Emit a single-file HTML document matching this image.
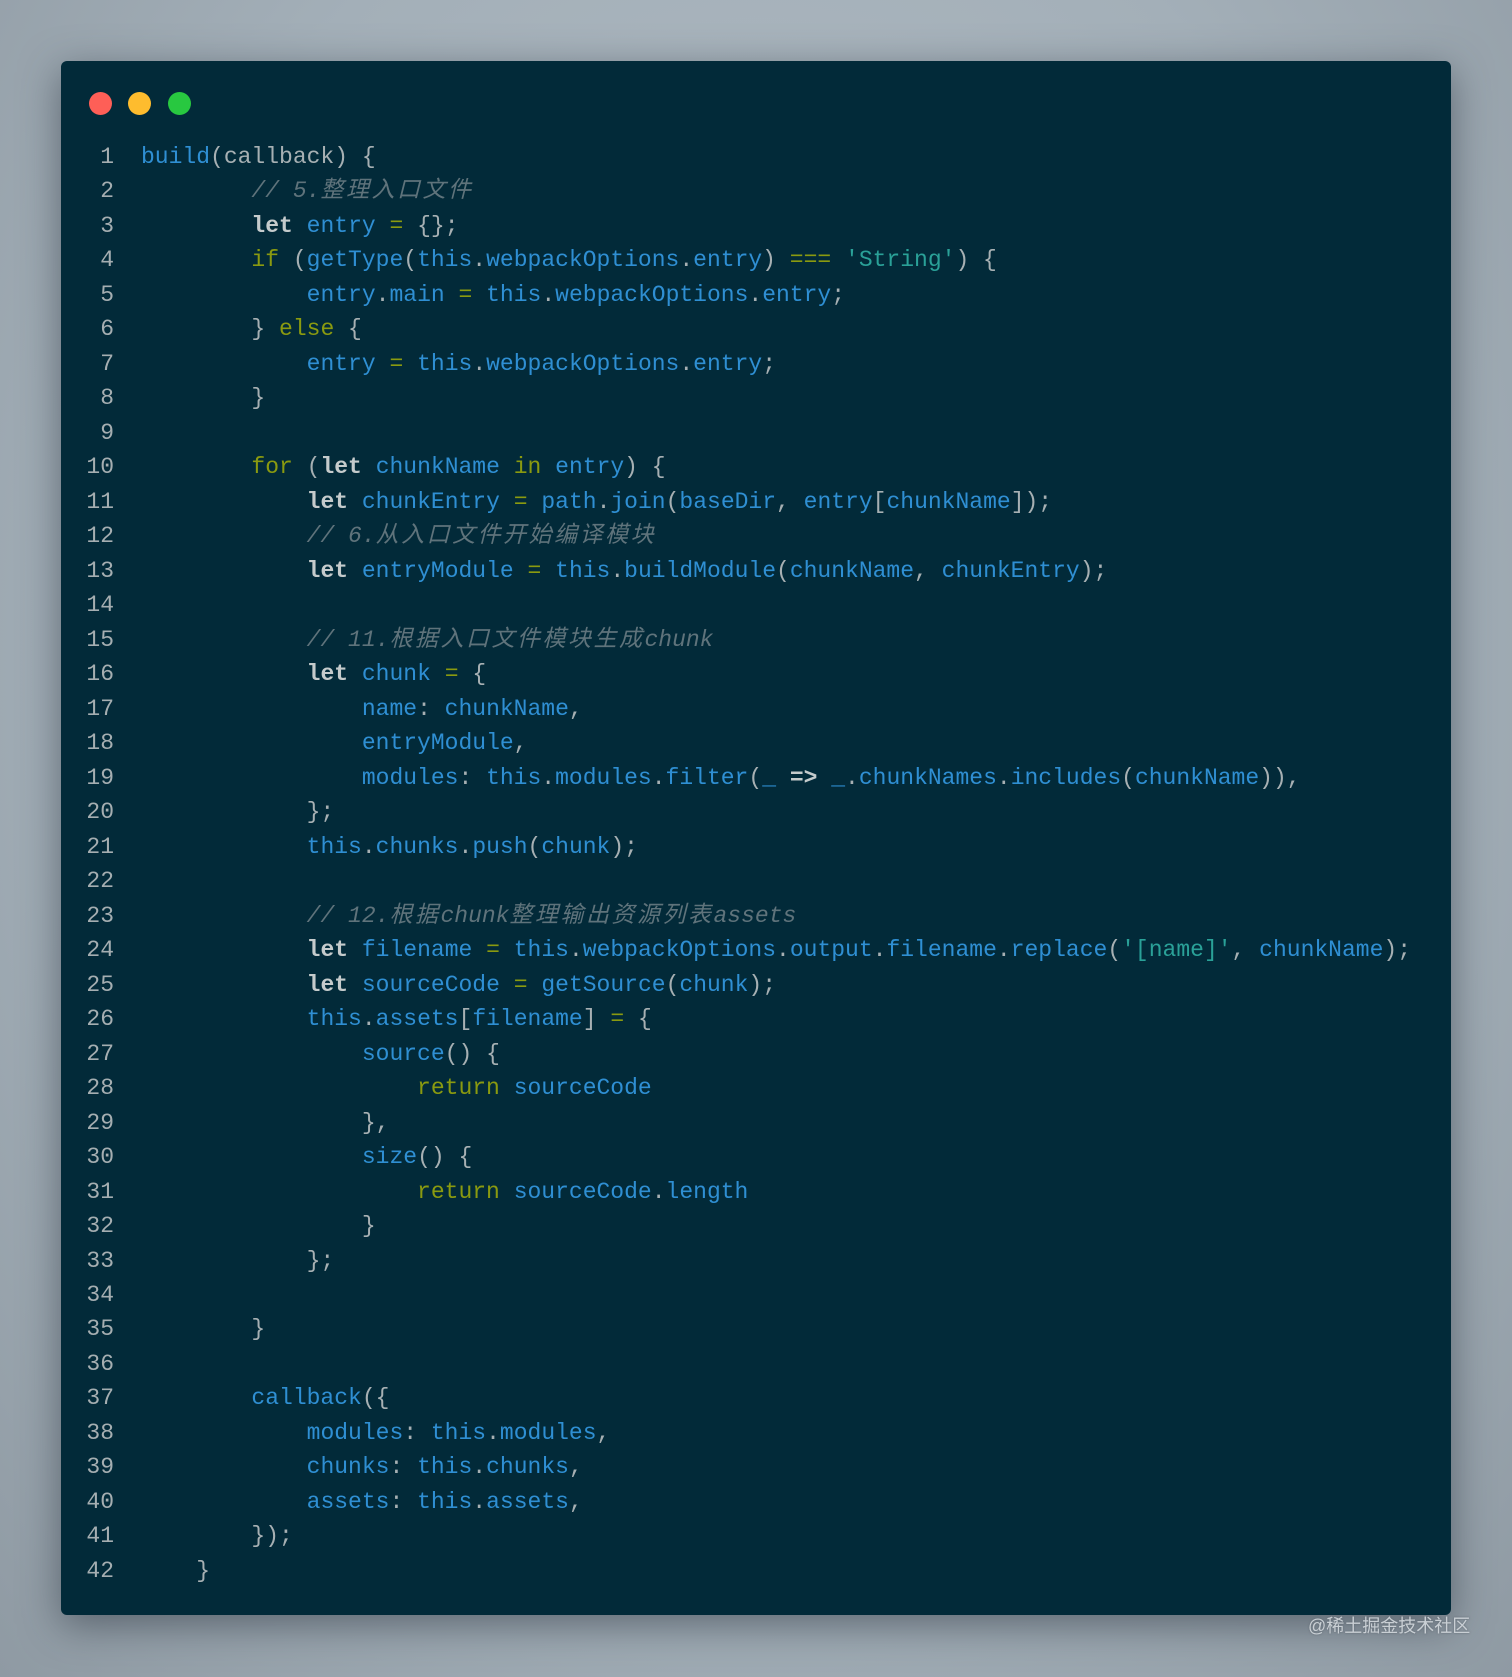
<!DOCTYPE html>
<html><head><meta charset="utf-8"><style>
html,body{margin:0;padding:0}
body{width:1512px;height:1677px;background:radial-gradient(ellipse at 50% 40%,#b4bec6 0%,#a3afb8 60%,#8f9aa3 100%);position:relative;overflow:hidden;font-family:"Liberation Mono","Noto Sans CJK SC",monospace}
.card{position:absolute;left:61px;top:61px;width:1390px;height:1554px;background:#022a39;border-radius:6px;box-shadow:0 10px 40px rgba(40,50,60,.55)}
.dot{position:absolute;top:92px;width:23px;height:23px;border-radius:50%}
.code{position:absolute;left:0;top:140px;font-size:23px;line-height:34.48px;white-space:pre;color:#a7b0b3}
.ln{position:absolute;left:78px;width:36px;text-align:right;color:#a5aeb1}
.tx{position:absolute;left:141px}
.b{color:#2f8fd3}.k{color:#8a9a10}.l{color:#c5cbcc;font-weight:bold}.s{color:#2aa198}.c{color:#5f737b;font-style:italic}
.z{letter-spacing:2.5px}
.wm{position:absolute;left:1308px;top:1612px;font-family:"Liberation Sans","Noto Sans CJK SC",sans-serif;font-size:18px;color:#c9cfd4;text-shadow:0 0 2px #5c6670}
</style></head><body>
<div class="card"></div>
<div class="dot" style="left:89px;background:#fe5f57"></div>
<div class="dot" style="left:128px;background:#febc2e"></div>
<div class="dot" style="left:168px;background:#28c840"></div>
<div class="code"><div class="ln">1
2
3
4
5
6
7
8
9
10
11
12
13
14
15
16
17
18
19
20
21
22
23
24
25
26
27
28
29
30
31
32
33
34
35
36
37
38
39
40
41
42</div><div class="tx"><span class="b">build</span>(callback) {
        <span class="c">// 5.<span class="z">整理入口文件</span></span>
        <span class="l">let</span> <span class="b">entry</span> <span class="k">=</span> {};
        <span class="k">if</span> (<span class="b">getType</span>(<span class="b">this</span>.<span class="b">webpackOptions</span>.<span class="b">entry</span>) <span class="k">===</span> <span class="s">'String'</span>) {
            <span class="b">entry</span>.<span class="b">main</span> <span class="k">=</span> <span class="b">this</span>.<span class="b">webpackOptions</span>.<span class="b">entry</span>;
        } <span class="k">else</span> {
            <span class="b">entry</span> <span class="k">=</span> <span class="b">this</span>.<span class="b">webpackOptions</span>.<span class="b">entry</span>;
        }

        <span class="k">for</span> (<span class="l">let</span> <span class="b">chunkName</span> <span class="k">in</span> <span class="b">entry</span>) {
            <span class="l">let</span> <span class="b">chunkEntry</span> <span class="k">=</span> <span class="b">path</span>.<span class="b">join</span>(<span class="b">baseDir</span>, <span class="b">entry</span>[<span class="b">chunkName</span>]);
            <span class="c">// 6.<span class="z">从入口文件开始编译模块</span></span>
            <span class="l">let</span> <span class="b">entryModule</span> <span class="k">=</span> <span class="b">this</span>.<span class="b">buildModule</span>(<span class="b">chunkName</span>, <span class="b">chunkEntry</span>);

            <span class="c">// 11.<span class="z">根据入口文件模块生成</span>chunk</span>
            <span class="l">let</span> <span class="b">chunk</span> <span class="k">=</span> {
                <span class="b">name</span>: <span class="b">chunkName</span>,
                <span class="b">entryModule</span>,
                <span class="b">modules</span>: <span class="b">this</span>.<span class="b">modules</span>.<span class="b">filter</span>(<span class="b">_</span> <span class="l">=&gt;</span> <span class="b">_</span>.<span class="b">chunkNames</span>.<span class="b">includes</span>(<span class="b">chunkName</span>)),
            };
            <span class="b">this</span>.<span class="b">chunks</span>.<span class="b">push</span>(<span class="b">chunk</span>);

            <span class="c">// 12.<span class="z">根据</span>chunk<span class="z">整理输出资源列表</span>assets</span>
            <span class="l">let</span> <span class="b">filename</span> <span class="k">=</span> <span class="b">this</span>.<span class="b">webpackOptions</span>.<span class="b">output</span>.<span class="b">filename</span>.<span class="b">replace</span>(<span class="s">'[name]'</span>, <span class="b">chunkName</span>);
            <span class="l">let</span> <span class="b">sourceCode</span> <span class="k">=</span> <span class="b">getSource</span>(<span class="b">chunk</span>);
            <span class="b">this</span>.<span class="b">assets</span>[<span class="b">filename</span>] <span class="k">=</span> {
                <span class="b">source</span>() {
                    <span class="k">return</span> <span class="b">sourceCode</span>
                },
                <span class="b">size</span>() {
                    <span class="k">return</span> <span class="b">sourceCode</span>.<span class="b">length</span>
                }
            };

        }

        <span class="b">callback</span>({
            <span class="b">modules</span>: <span class="b">this</span>.<span class="b">modules</span>,
            <span class="b">chunks</span>: <span class="b">this</span>.<span class="b">chunks</span>,
            <span class="b">assets</span>: <span class="b">this</span>.<span class="b">assets</span>,
        });
    }</div></div>
<div class="wm">@稀土掘金技术社区</div>
</body></html>
